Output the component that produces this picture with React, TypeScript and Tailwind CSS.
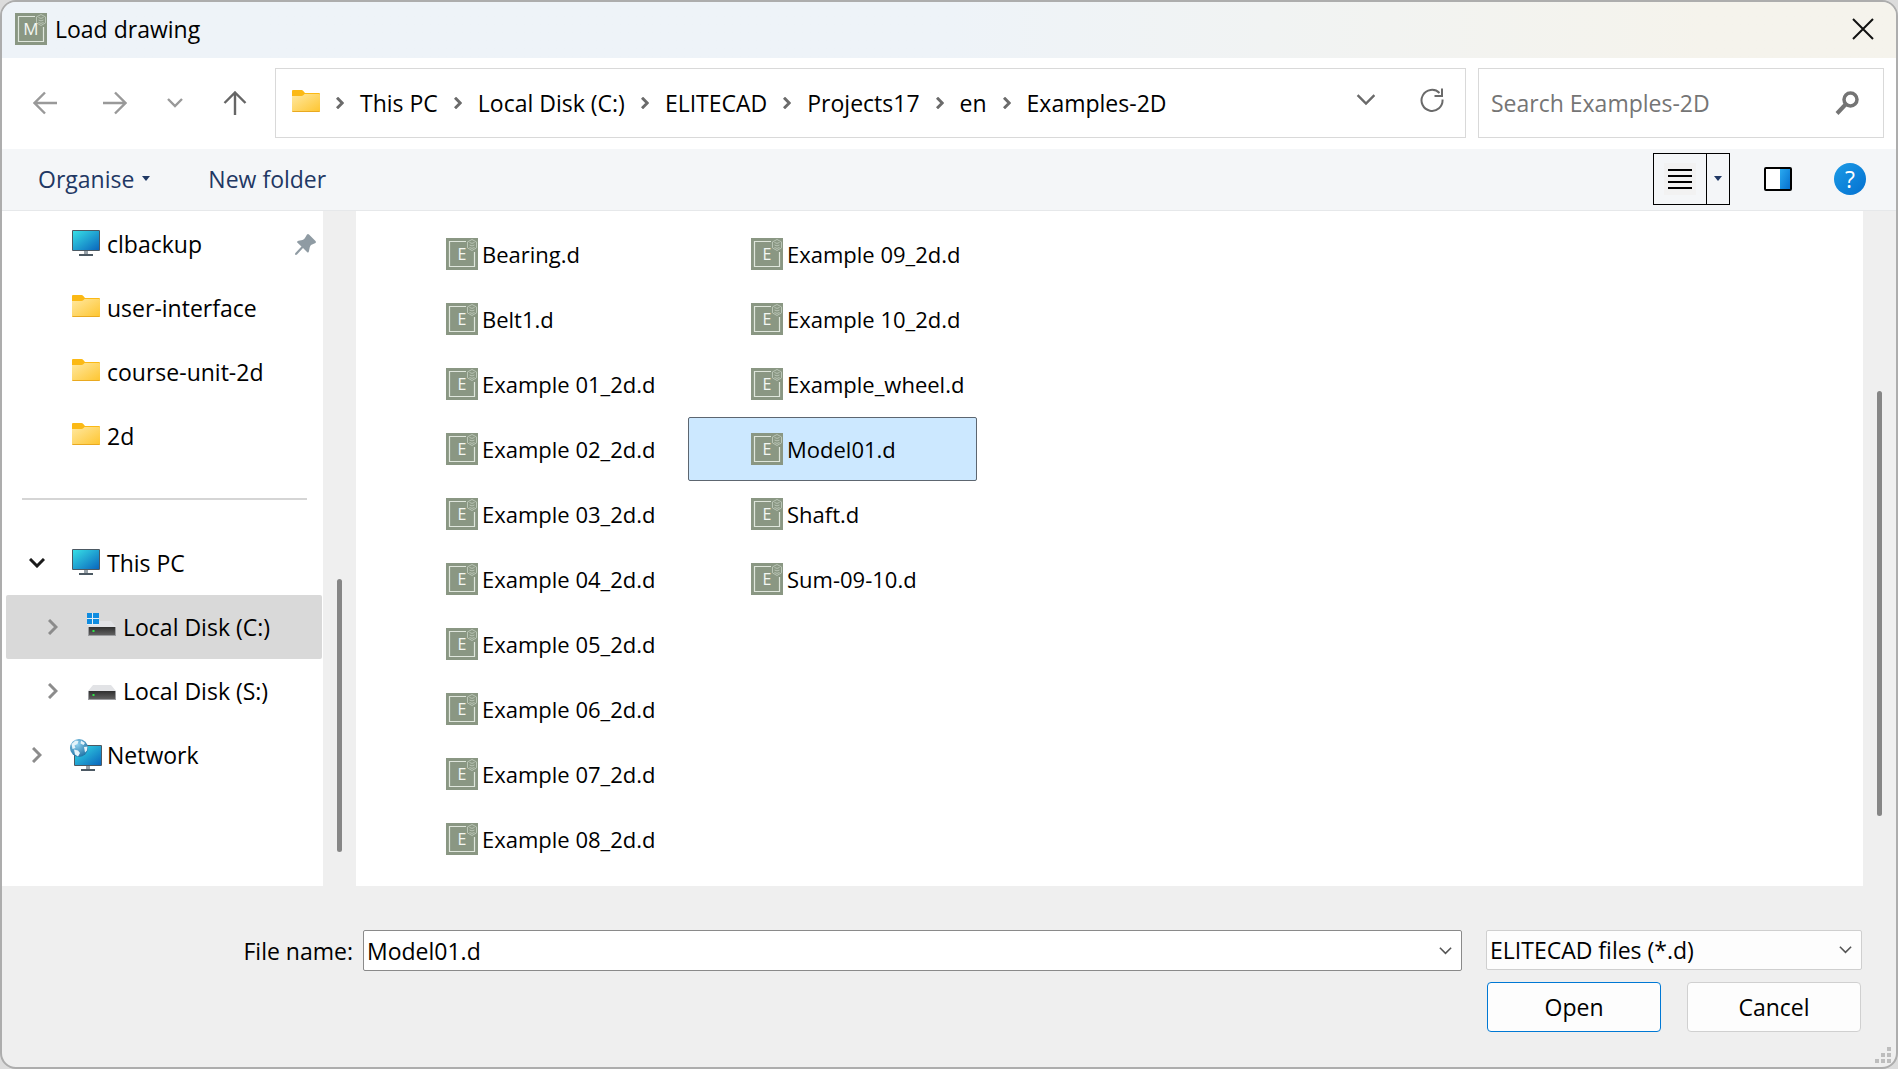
import { useState } from 'react'
import type { ReactNode } from 'react'
import clsx from 'clsx'

const crumbs = ['This PC', 'Local Disk (C:)', 'ELITECAD', 'Projects17', 'en', 'Examples-2D']

const files = [
  'Bearing.d',
  'Belt1.d',
  'Example 01_2d.d',
  'Example 02_2d.d',
  'Example 03_2d.d',
  'Example 04_2d.d',
  'Example 05_2d.d',
  'Example 06_2d.d',
  'Example 07_2d.d',
  'Example 08_2d.d',
  'Example 09_2d.d',
  'Example 10_2d.d',
  'Example_wheel.d',
  'Model01.d',
  'Shaft.d',
  'Sum-09-10.d',
]

function EliteIcon({ letter }: { letter: string }) {
  return (
    <svg viewBox="0 0 32 32" className="size-8 shrink-0" aria-hidden="true">
      <rect width="32" height="32" fill="#8a9783" />
      <path d="M20 3.5H3.5v25h25V14" fill="none" stroke="#dfe6dc" strokeWidth="1.2" />
      <path d="M26 1.500l4.500 2.400v6L26 12.500l-4.500-2.600v-6z" fill="none" stroke="#b9c4b5" strokeWidth="1" />
      <path d="M23.500 4.500q2.500 1.800 5 0M23.500 7q2.500 1.800 5 0M23.500 9.500q2.500 1.800 5 0" fill="none" stroke="#b9c4b5" strokeWidth="1" />
      <text
        x="16"
        y="22"
        textAnchor="middle"
        fill="#f3f6f1"
        className={clsx("font-['Open_Sans']", letter === 'M' ? 'text-[17px]' : 'text-[16px]')}
      >
        {letter}
      </text>
    </svg>
  )
}

function FolderIcon() {
  return (
    <svg viewBox="0 0 28 28" className="size-7 shrink-0" aria-hidden="true">
      <defs>
        <linearGradient id="folder" x1="0" y1="0" x2="1" y2="1">
          <stop offset="0" stopColor="#ffe8a0" />
          <stop offset="1" stopColor="#fec52f" />
        </linearGradient>
      </defs>
      <path d="M0 2q0-1 1-1h8.500q1 0 1.800.9l1.700 2.100h14q1 0 1 1v6H0z" fill="#fbb915" />
      <path d="M0 7h9.500q1 0 1.800-.8l1.200-1.200H27q1 0 1 1v16q0 1-1 1H1q-1 0-1-1z" fill="url(#folder)" />
      <path d="M0 21.600q0 1.400 1 1.400h26q1 0 1-1.400v.4H0z" fill="#e9a920" />
    </svg>
  )
}

function MonitorShape() {
  return (
    <>
      <defs>
        <linearGradient id="screen" x1="0" y1="0" x2="1" y2="1">
          <stop offset="0" stopColor="#37dfe6" />
          <stop offset="1" stopColor="#0a66bd" />
        </linearGradient>
      </defs>
      <rect width="28" height="21" rx="1" fill="#4c5963" />
      <rect x="1" y="1" width="26" height="19" fill="url(#screen)" />
      <rect x="12" y="21" width="4" height="3" fill="#98a1a8" />
      <rect x="7" y="24" width="14" height="2" fill="#4c5963" />
    </>
  )
}

function MonitorIcon() {
  return (
    <svg viewBox="0 0 28 28" className="size-7 shrink-0" aria-hidden="true">
      <MonitorShape />
    </svg>
  )
}

function NetworkIcon() {
  return (
    <svg viewBox="0 0 32 32" className="-mx-0.5 size-8 shrink-0" aria-hidden="true">
      <defs>
        <radialGradient id="globe" cx="0.4" cy="0.3" r="0.7">
          <stop offset="0" stopColor="#8fd0ee" />
          <stop offset="1" stopColor="#2376a8" />
        </radialGradient>
      </defs>
      <g transform="translate(4 6)">
        <MonitorShape />
      </g>
      <circle cx="9" cy="9" r="9" fill="url(#globe)" />
      <path d="M1.500 5l4-3.500 3 .5-1 3-3 1.500 1 2.500-3 1zM4 10.500l4 1 2 2.500-2 3.500-3-2zM11 1.500l4 2.500-1.500 2-3-1.500zM14 8l3.500-.5-.5 4-2 2z" fill="#e4f3fa" />
    </svg>
  )
}

function DiskIcon({ system = false }: { system?: boolean }) {
  return (
    <svg viewBox="0 0 28 28" className="size-7 shrink-0 overflow-visible" aria-hidden="true">
      <defs>
        <linearGradient id="disk" x1="0" y1="0" x2="0" y2="1">
          <stop offset="0" stopColor="#2f2f2f" />
          <stop offset="1" stopColor="#606060" />
        </linearGradient>
      </defs>
      <path d="M5 8h18l5 6H0z" fill="#e2e3e6" />
      <rect y="14" width="28" height="9" fill="#9c9da0" />
      <rect x="1" y="14" width="26" height="8" fill="url(#disk)" />
      <rect x="4.500" y="17" width="2" height="2" fill="#2fe648" />
      {system && (
        <g>
          <rect x="-1" y="0" width="12" height="12" fill="#e4eef5" />
          <path d="M-1 0h5v5h-5zM5 0h6v5H5zM-1 6h5v5h-5zM5 6h6v5H5z" fill="#0f8ce0" />
        </g>
      )}
    </svg>
  )
}

interface ChevronProps {
  dir: 'right' | 'down'
  className: string
  width?: number
}

function Chevron({ dir, className, width = 2 }: ChevronProps) {
  return (
    <svg
      viewBox={dir === 'down' ? '0 0 16 10' : '0 0 10 16'}
      className={clsx('shrink-0', className)}
      fill="none"
      stroke="currentColor"
      strokeWidth={width}
      aria-hidden="true"
    >
      <path d={dir === 'down' ? 'M1 1l7 7 7-7' : 'M1 1l7 7-7 7'} />
    </svg>
  )
}

function Caret() {
  return (
    <svg viewBox="0 0 8 5" className="h-[5px] w-2 shrink-0 text-[#1f3864]" fill="currentColor" aria-hidden="true">
      <path d="M0 0h8L4 5z" />
    </svg>
  )
}

interface TreeRowProps {
  icon: ReactNode
  label: string
  toggle?: 'right' | 'down'
  nested?: boolean
  selected?: boolean
  pinned?: boolean
}

function TreeRow({ icon, label, toggle, nested, selected, pinned }: TreeRowProps) {
  return (
    <li>
      <button
        type="button"
        className={clsx(
          'ml-1 mr-px flex h-16 w-[316px] items-center rounded-xs pr-1.5 text-left',
          nested ? 'pl-[39px]' : 'pl-[23px]',
          selected && 'bg-[#d9d9d9]',
        )}
      >
        <span className="flex w-[43px] shrink-0">
          {toggle === 'down' && <Chevron dir="down" className="h-[10px] w-4 text-[#1b1b1b]" width={3} />}
          {toggle === 'right' && <Chevron dir="right" className="ml-[3px] h-4 w-[10px] text-[#8c8c8c]" width={3} />}
        </span>
        {icon}
        <span className="ml-[7px]">{label}</span>
        {pinned && (
          <svg viewBox="0 0 21 21" className="ml-auto size-[21px]" fill="#8f9ba3" aria-hidden="true">
            <path d="M12 0.500q1-.8 2 0l6.500 6.500q.8 1 0 2L16 11q-1 1-1.300 2.500L14 17q-.5 2.500-2 1l-4-4-6 6.500q-1 .8-1.600.2-.7-.8 0-1.700L6.500 12.500 2.500 8.800q-1.200-1.300 1-2l4-.8Q9 5.500 9.800 4.200z" />
          </svg>
        )}
      </button>
    </li>
  )
}

export default function App() {
  const [selected, setSelected] = useState('Model01.d')

  return (
    <div className="flex min-h-screen bg-[#dcdcdc] font-['Open_Sans','Noto_Sans',sans-serif] text-[23px] leading-8 text-black">
      <div className="flex flex-1 flex-col overflow-hidden rounded-2xl border-2 border-[#adadad] bg-[#efefef]">
        <header className="flex h-14 items-center bg-linear-to-r from-[#eef3f8] from-50% to-[#f5f3ec] to-90% pb-0.5 pl-[13px] pr-[22px]">
          <EliteIcon letter="M" />
          <h1 className="ml-2">Load drawing</h1>
          <button type="button" aria-label="Close" className="ml-auto">
            <svg viewBox="0 0 22 22" className="size-[22px]" stroke="#111" strokeWidth="2" aria-hidden="true">
              <path d="M1 1l20 20M21 1L1 21" />
            </svg>
          </button>
        </header>

        <div className="flex h-[91px] items-center gap-3 bg-white pb-0.5 pr-3">
          <nav aria-label="History" className="flex w-[261px] shrink-0 items-center pl-[31px]">
            <button type="button" aria-label="Back" className="text-[#999]">
              <svg viewBox="0 0 24 24" className="size-6" fill="none" stroke="currentColor" strokeWidth="2.400" aria-hidden="true">
                <path d="M24 12H1M12 1.500L1.500 12 12 22.500" />
              </svg>
            </button>
            <button type="button" aria-label="Forward" className="ml-[46px] text-[#999]">
              <svg viewBox="0 0 24 24" className="size-6" fill="none" stroke="currentColor" strokeWidth="2.400" aria-hidden="true">
                <path d="M0 12h23M12 1.500L22.500 12 12 22.500" />
              </svg>
            </button>
            <button type="button" aria-label="Recent locations" className="ml-10 text-[#999]">
              <Chevron dir="down" className="h-[10px] w-4" width={2.4} />
            </button>
            <button type="button" aria-label="Up" className="ml-10 text-[#666]">
              <svg viewBox="0 0 24 24" className="size-6" fill="none" stroke="currentColor" strokeWidth="2.400" aria-hidden="true">
                <path d="M12 24V1M1.500 12L12 1.500 22.500 12" />
              </svg>
            </button>
          </nav>

          <div className="flex h-[70px] flex-1 items-center border border-[#d9d9d9] pl-4 pr-[21px]">
            <FolderIcon />
            {crumbs.map((crumb) => (
              <span key={crumb} className="flex items-center">
                <Chevron dir="right" className="mx-4 h-3 w-2 text-[#6b6b6b]" width={4} />
                <button type="button">{crumb}</button>
              </span>
            ))}
            <div className="ml-auto flex items-center gap-11 pb-1.5 text-[#6a6a6a]">
              <button type="button" aria-label="Previous locations">
                <Chevron dir="down" className="h-3 w-5" width={2} />
              </button>
              <button type="button" aria-label="Refresh">
                <svg viewBox="0 0 24 24" className="size-6" fill="none" stroke="currentColor" strokeWidth="2" aria-hidden="true">
                  <path d="M22.500 11.500A10.500 10.500 0 1 1 19.500 5M22 0.500V8h-7.500" />
                </svg>
              </button>
            </div>
          </div>

          <label className="flex h-[70px] w-[406px] shrink-0 items-center border border-[#d9d9d9] pl-3 pr-6">
            <input
              type="search"
              aria-label="Search Examples-2D"
              placeholder="Search Examples-2D"
              className="min-w-0 flex-1 outline-none placeholder:text-[#757575]"
            />
            <svg viewBox="0 0 24 24" className="size-6" fill="none" stroke="#747474" aria-hidden="true">
              <circle cx="15.500" cy="8.500" r="6.500" strokeWidth="3.500" />
              <path d="M11 13L2 22.500" strokeWidth="4" />
            </svg>
          </label>
        </div>

        <div className="flex h-[62px] items-center border-b border-[#e6e8ea] bg-[#f4f6f8] pb-0.5 pl-9 pr-[30px] text-[#1f3864]">
          <button type="button" className="flex items-center gap-2">
            Organise <Caret />
          </button>
          <button type="button" className="ml-[58px]">
            New folder
          </button>
          <div className="ml-auto flex h-[52px] border border-black">
            <button type="button" aria-label="View" className="flex w-[53px] items-center justify-center border-r border-black">
              <span className="bg-[#f2f2f2] p-1">
                <svg viewBox="0 0 24 24" className="size-6" stroke="#000" strokeWidth="2" aria-hidden="true">
                  <path d="M0 3h24M0 9h24M0 15h24M0 21h24" />
                </svg>
              </span>
            </button>
            <button type="button" aria-label="More view options" className="flex w-[22px] items-center justify-center">
              <Caret />
            </button>
          </div>
          <button type="button" aria-label="Preview pane" className="ml-[34px]">
            <svg viewBox="0 0 28 24" className="h-6 w-7" aria-hidden="true">
              <defs>
                <linearGradient id="pane" x1="0" y1="0" x2="1" y2="1">
                  <stop offset="0" stopColor="#2aaaf0" />
                  <stop offset="1" stopColor="#0670cf" />
                </linearGradient>
              </defs>
              <rect x="1" y="1" width="26" height="22" rx="1" fill="#fff" stroke="#000" strokeWidth="2" />
              <rect x="16" y="2" width="10" height="20" fill="url(#pane)" />
            </svg>
          </button>
          <button
            type="button"
            aria-label="Help"
            className="ml-[42px] flex size-8 items-center justify-center rounded-full bg-linear-to-br from-[#1c9be6] to-[#0570d0] text-white"
          >
            ?
          </button>
        </div>

        <main className="flex flex-1">
          <aside className="w-[321px] shrink-0 bg-white pt-px">
            <ul>
              <TreeRow icon={<MonitorIcon />} label="clbackup" pinned />
              <TreeRow icon={<FolderIcon />} label="user-interface" />
              <TreeRow icon={<FolderIcon />} label="course-unit-2d" />
              <TreeRow icon={<FolderIcon />} label="2d" />
            </ul>
            <hr className="mb-[31px] ml-5 mr-4 mt-[30px] border-t-2 border-[#d5d5d5]" />
            <ul>
              <TreeRow icon={<MonitorIcon />} label="This PC" toggle="down" />
              <TreeRow icon={<DiskIcon system />} label="Local Disk (C:)" toggle="right" nested selected />
              <TreeRow icon={<DiskIcon />} label="Local Disk (S:)" toggle="right" nested />
              <TreeRow icon={<NetworkIcon />} label="Network" toggle="right" />
            </ul>
          </aside>
          <div className="flex w-[33px] shrink-0 flex-col items-center">
            <div className="mt-[368px] h-[273px] w-[5px] rounded-full bg-[#868686]" />
          </div>
          <section aria-label="Files" className="flex-1 bg-white pl-[27px] pt-[11px]">
            <ul className="grid w-max grid-flow-col grid-rows-[repeat(10,64px)] gap-x-4 gap-y-px text-[22px]">
              {files.map((file) => (
                <li key={file}>
                  <button
                    type="button"
                    onClick={() => setSelected(file)}
                    className={clsx(
                      'flex h-16 w-[289px] items-center gap-1 rounded-xs border pl-[62px]',
                      file === selected ? 'border-[#5d6670] bg-[#cce8ff]' : 'border-transparent',
                    )}
                  >
                    <EliteIcon letter="E" />
                    {file}
                  </button>
                </li>
              ))}
            </ul>
          </section>
          <div className="flex w-[33px] shrink-0 flex-col items-center">
            <div className="mt-[180px] h-[425px] w-[5px] rounded-full bg-[#868686]" />
          </div>
        </main>

        <footer className="flex h-[181px] pt-11">
          <div className="flex h-[41px] flex-1 items-center">
            <label htmlFor="file-name" className="w-[361px] shrink-0 pr-2.5 text-right">
              File name:
            </label>
            <div className="flex h-[41px] flex-1 items-center rounded-xs border border-[#8a8a8a] bg-white pl-[3px] pr-[9px]">
              <input
                id="file-name"
                value={selected}
                onChange={(e) => setSelected(e.target.value)}
                className="min-w-0 flex-1 outline-none"
              />
              <button type="button" aria-label="Previous file names" className="text-[#555]">
                <Chevron dir="down" className="h-2 w-[13px]" width={2} />
              </button>
            </div>
          </div>
          <div className="ml-6 w-[376px] shrink-0">
            <div className="flex h-10 items-center rounded-xs border border-[#cfcfcf] bg-[#fdfdfd] pr-[9px] text-[#555]">
              <select aria-label="File type" className="min-w-0 flex-1 appearance-none pl-[3px] text-black outline-none">
                <option>ELITECAD files (*.d)</option>
              </select>
              <Chevron dir="down" className="h-2 w-[13px]" width={2} />
            </div>
            <div className="mt-3 flex justify-between px-px">
              <button type="button" className="h-[50px] w-[174px] rounded border border-[#0078d4] bg-[#fdfdfd]">
                Open
              </button>
              <button type="button" className="h-[50px] w-[174px] rounded border border-[#d0d0d0] bg-[#fdfdfd]">
                Cancel
              </button>
            </div>
          </div>
          <div className="flex w-[34px] shrink-0 items-end justify-end pb-1 pr-[5px]">
            <svg viewBox="0 0 16 16" className="size-4" fill="#bdbdbd" aria-hidden="true">
              <path d="M12 0h4v4h-4zM6 6h4v4H6zM12 6h4v4h-4zM0 12h4v4H0zM6 12h4v4H6zM12 12h4v4h-4z" />
            </svg>
          </div>
        </footer>
      </div>
    </div>
  )
}
